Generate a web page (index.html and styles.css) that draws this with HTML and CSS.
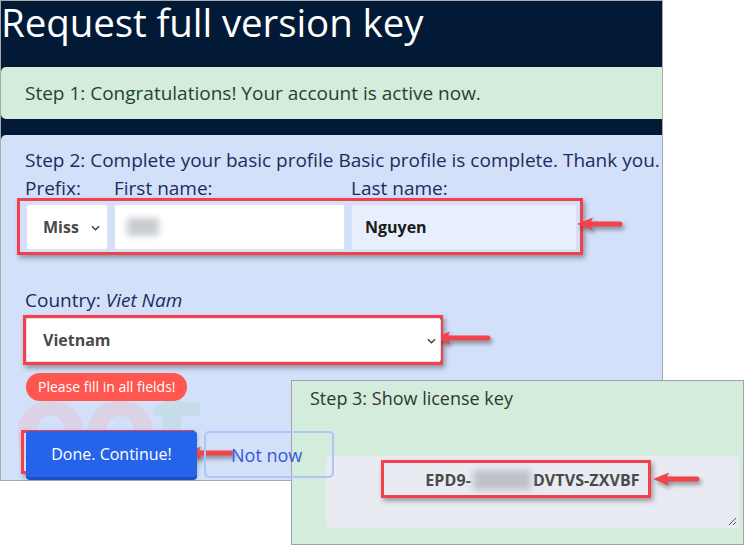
FILE: index.html
```html
<!DOCTYPE html>
<html lang="en">
<head>
<meta charset="utf-8">
<title>Request full version key</title>
<link rel="stylesheet" href="styles.css">
</head>
<body>
<div class="stage">
  <div class="window">
    <h1 class="title">Request full version key</h1>
    <div class="step1">Step 1: Congratulations! Your account is active now.</div>
    <div class="step2">
      <div class="watermark"><span class="wm-o">oo</span><span class="wm-t">t</span></div>
      <div class="step2-body">
        <p class="step2-title">Step 2: Complete your basic profile Basic profile is complete. Thank you.</p>
        <div class="name-grid">
          <span class="lbl">Prefix:</span>
          <span class="lbl">First name:</span>
          <span class="lbl">Last name:</span>
          <div class="field select prefix">
            <span class="val">Miss</span>
            <svg class="chev" viewBox="0 0 10 6" width="9" height="6"><path d="M1 1l4 4 4-4" fill="none" stroke="#444" stroke-width="1.6"/></svg>
          </div>
          <div class="field"><span class="blurred name-blur"></span></div>
          <div class="field readonly"><span class="val dark">Nguyen</span></div>
        </div>
        <p class="country-label">Country: <em>Viet Nam</em></p>
        <div class="field select country">
          <span class="val">Vietnam</span>
          <svg class="chev" viewBox="0 0 10 6" width="9" height="6"><path d="M1 1l4 4 4-4" fill="none" stroke="#444" stroke-width="1.6"/></svg>
        </div>
        <div class="error-pill">Please fill in all fields!</div>
        <div class="buttons">
          <button class="btn-primary">Done. Continue!</button>
          <button class="btn-outline">Not now</button>
        </div>
      </div>
    </div>
  </div>

  <div class="step3">
    <p class="step3-title">Step 3: Show license key</p>
    <div class="keybox">
      <span class="key">EPD9-<span class="blurred key-blur"></span>DVTVS-ZXVBF</span>
      <svg class="grip" viewBox="0 0 10 10" width="10" height="10"><path d="M9 2L2 9M9 6L6 9" stroke="#555" stroke-width="1"/></svg>
    </div>
  </div>

  <div class="mark mark-names"></div>
  <div class="mark mark-country"></div>
  <div class="mark mark-done"></div>
  <div class="mark mark-key"></div>

  <svg class="arrow arrow-1" width="50" height="20" viewBox="0 0 50 20"><path d="M14 10H44" stroke="#f2424a" stroke-width="5" stroke-linecap="round"/><path d="M1 10L17 3.5L14 10L17 16.5Z" fill="#f2424a"/></svg>
  <svg class="arrow arrow-2" width="62" height="20" viewBox="0 0 62 20"><path d="M14 10H55" stroke="#f2424a" stroke-width="5" stroke-linecap="round"/><path d="M1 10L17 3.5L14 10L17 16.5Z" fill="#f2424a"/></svg>
  <svg class="arrow arrow-3" width="54" height="20" viewBox="0 0 54 20"><path d="M14 10H47" stroke="#f2424a" stroke-width="5" stroke-linecap="round"/><path d="M1 10L17 3.5L14 10L17 16.5Z" fill="#f2424a"/></svg>
  <svg class="arrow arrow-4" width="52" height="20" viewBox="0 0 52 20"><path d="M14 10H45" stroke="#f2424a" stroke-width="5" stroke-linecap="round"/><path d="M1 10L17 3.5L14 10L17 16.5Z" fill="#f2424a"/></svg>
</div>
</body>
</html>
```

FILE: styles.css
```css
* { box-sizing: border-box; }
html, body { margin: 0; padding: 0; background: #fff; }
body { font-family: "Open Sans", "Noto Sans", sans-serif; width: 744px; height: 549px; overflow: hidden; }

.stage { position: relative; width: 744px; height: 549px; }

.window {
  width: 663px;
  height: 481px;
  border: 1px solid #a9a9a9;
  background: #021a36;
  display: flex;
  flex-direction: column;
  overflow: hidden;
}

.title {
  margin: 0;
  padding: 1px 0 0 0;
  font-weight: 400;
  font-size: 38.5px;
  line-height: 40px;
  color: #fff;
  letter-spacing: -0.1px;
  height: 66px;
  white-space: nowrap;
}

.step1 {
  height: 52px;
  background: #d4ecdb;
  border-radius: 5px 0 0 5px;
  color: #22452f;
  font-size: 19px;
  line-height: 52px;
  padding-left: 24px;
}

.step2 {
  position: relative;
  margin-top: 16px;
  flex: 1;
  background: #d2e0f9;
  border-radius: 5px 0 0 0;
  overflow: hidden;
}

.watermark {
  position: absolute;
  left: 11px;
  top: 225px;
  font-size: 125px;
  font-weight: 700;
  line-height: 125px;
  letter-spacing: -8px;
  z-index: 0;
  white-space: nowrap;
}
.wm-o { color: #dcd2e6; }
.wm-t { color: #c6dde9; }

.step2-body {
  position: relative;
  z-index: 1;
  padding: 11px 0 0 24px;
  display: flex;
  flex-direction: column;
  align-items: flex-start;
}

.step2-title {
  margin: 0;
  font-size: 19px;
  line-height: 28px;
  color: #1f2b5c;
  white-space: nowrap;
}

.name-grid {
  display: grid;
  grid-template-columns: 83px 231px 226px;
  grid-template-rows: 28px 46px;
  column-gap: 6px;
  row-gap: 2px;
}

.lbl {
  font-size: 19px;
  line-height: 28px;
  color: #1f2b5c;
}

.field {
  position: relative;
  height: 46px;
  background: #fff;
  border: 1px solid #dfe5ef;
  border-radius: 3px;
  display: flex;
  align-items: center;
  padding-left: 16px;
}
.field.prefix { margin-left: 1px; }
.field.readonly { background: #e7eefc; border-color: #dbe3f3; padding-left: 13px; }

.val {
  font-size: 16px;
  font-weight: 700;
  color: #4a4a4a;
}
.val.dark { color: #1b1b1b; }

.chev { position: absolute; right: 7px; top: 20px; }
.field.country .chev { right: 4px; top: 19px; }

.blurred {
  display: inline-block;
  background: #c9ccd2;
  filter: blur(3px);
  border-radius: 3px;
}
.name-blur { width: 32px; height: 18px; margin-left: -4px; }

.country-label {
  margin: 36px 0 0 0;
  font-size: 19px;
  line-height: 28px;
  color: #1f2b5c;
}
.country-label em { font-style: italic; }

.field.country {
  margin-top: 4px;
  width: 415px;
  height: 44px;
  margin-left: 1px;
}

.error-pill {
  margin-top: 11px;
  margin-left: 1px;
  height: 28px;
  padding: 0 11px 0 12px;
  border-radius: 14px;
  background: #ff5650;
  color: #fff;
  font-size: 14px;
  line-height: 28px;
}

.buttons {
  margin-top: 30px;
  margin-left: 1px;
  display: flex;
  gap: 7px;
}

.btn-primary {
  width: 171px;
  height: 46px;
  border: none;
  border-radius: 4px;
  background: #2563eb;
  box-shadow: 0 3px 0 #1d50c8;
  color: #fff;
  font-family: inherit;
  font-size: 16px;
  padding: 0;
}

.btn-outline {
  width: 130px;
  height: 47px;
  border: 2px solid #adc5f7;
  border-radius: 5px;
  background: transparent;
  color: #3557e0;
  font-family: inherit;
  font-size: 18px;
  text-align: left;
  padding: 0 0 0 25px;
}

.step3 {
  position: absolute;
  left: 291px;
  top: 380px;
  width: 453px;
  height: 165px;
  background: #d4ecdb;
  border: 1px solid #a3a3a3;
  padding: 5px 0 0 18px;
}

.step3-title {
  margin: 0;
  font-size: 18px;
  line-height: 24px;
  color: #2b3b30;
}

.keybox {
  position: relative;
  margin: 46px 0 0 16px;
  width: 413px;
  height: 72px;
  background: #e8ebf1;
  border-radius: 4px;
  text-align: center;
  padding-top: 12px;
}

.key {
  font-size: 16px;
  font-weight: 700;
  line-height: 24px;
  color: #4a4a4a;
  letter-spacing: 0.1px;
}
.key-blur { width: 58px; height: 20px; vertical-align: -4px; margin: 0 2px; background: #bfc2c8; }

.grip { position: absolute; right: 2px; bottom: 2px; }

.mark {
  position: absolute;
  border: 3px solid #f2414a;
  box-shadow: 2px 3px 5px rgba(0, 0, 0, 0.35);
}
.mark-names { left: 17px; top: 198px; width: 566px; height: 57px; }
.mark-country { left: 23px; top: 315px; width: 420px; height: 50px; }
.mark-done { left: 21px; top: 430px; width: 173px; height: 44px; }
.mark-key { left: 381px; top: 460px; width: 270px; height: 38px; }

.arrow {
  position: absolute;
  filter: drop-shadow(2px 3px 2px rgba(0, 0, 0, 0.4));
}
.arrow-1 { left: 576px; top: 214px; }
.arrow-2 { left: 433px; top: 328px; }
.arrow-3 { left: 184px; top: 443px; }
.arrow-4 { left: 652px; top: 469px; }
```
